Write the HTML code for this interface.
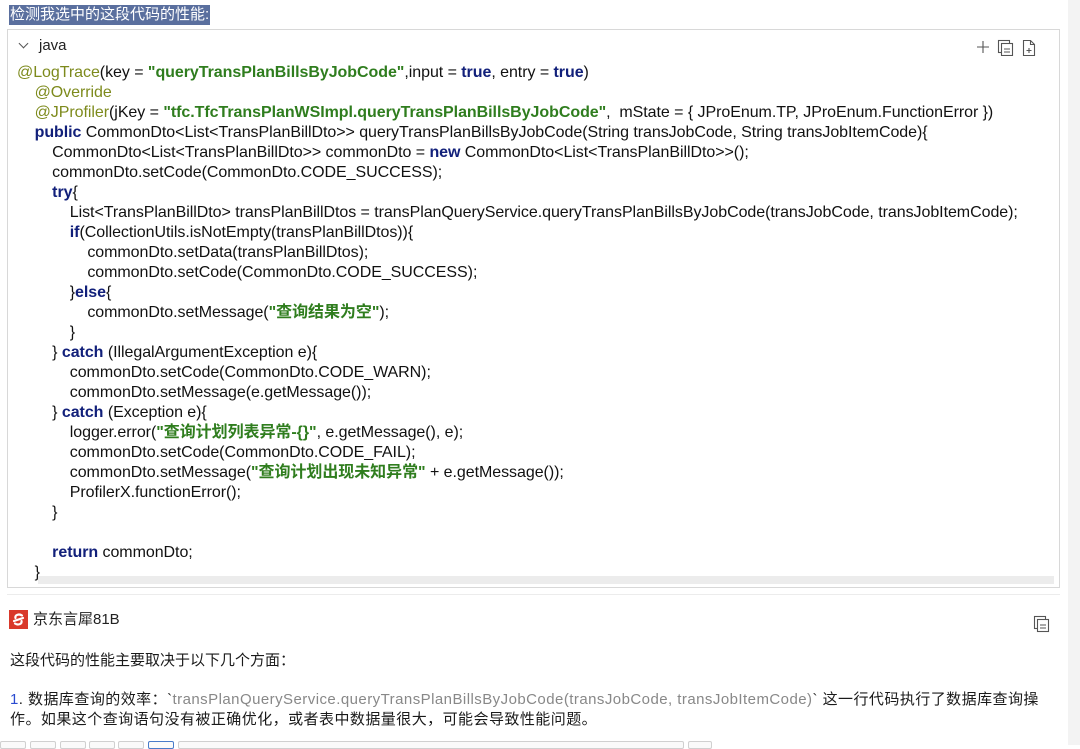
<!DOCTYPE html>
<html><head><meta charset="utf-8">
<style>
*{margin:0;padding:0;box-sizing:border-box}
body{width:1080px;height:745px;overflow:hidden;background:#fff;font-family:"Liberation Sans","Noto Sans CJK SC",sans-serif;color:#1a1a1a;position:relative}
.title{position:absolute;left:9px;top:5px;height:20px;background:#5a6f9e;color:#fff;font-size:15px;line-height:20px;padding:0 1px}
.side{position:absolute;left:1068px;top:0;width:12px;height:745px;background:#f3f3f3}
.box{position:absolute;left:7px;top:29px;width:1053px;height:559px;border:1px solid #d8d8d8;background:#fff;overflow:hidden}
.hdr{position:absolute;left:10px;top:7px;font-size:15px;color:#222}
.hdr .chev{display:inline-block;width:7px;height:7px;border-right:1.2px solid #555;border-bottom:1.2px solid #555;transform:rotate(45deg);margin:0 12px 3px 2px}
.code{position:absolute;left:9px;top:33px;font-size:16px;line-height:20px;color:#111;letter-spacing:-0.05px}
.code div{height:20px;white-space:pre}
.a{color:#7d8a1c}
.k{color:#12207a;font-weight:bold}
.s{color:#2f7d1e;font-weight:bold}
.sb{position:absolute;left:30px;top:546px;width:1016px;height:8px;background:#ececec}
.div{position:absolute;left:7px;top:594px;width:1053px;height:1px;background:#ececec}
.bot{position:absolute;top:741px;height:8px;border:1px solid #d0d0d0;border-radius:2px;background:#fafafa}
</style></head><body>
<div class="title">检测我选中的这段代码的性能:</div>
<div class="side"></div>
<div class="box">
 <div class="hdr"><span class="chev"></span>java</div>
 <svg style="position:absolute;left:968px;top:8px" width="70" height="18" viewBox="0 0 70 18" fill="none" stroke="#555" stroke-width="1.1">
  <path d="M7 3v12M1 9h12"/>
  <rect x="22.5" y="2.5" width="11" height="12"/><rect x="25.5" y="5.5" width="11" height="12" fill="#fff"/><path d="M28 11h6M28 14h6"/>
  <path d="M47.5 2.5h7l4 4v11h-11z"/><path d="M54.5 2.5v4h4M53 10v5M50.5 12.5h5"/>
 </svg>
 <div class="code"><div><span class="a">@LogTrace</span>(key = <span class="s">"queryTransPlanBillsByJobCode"</span>,input = <span class="k">true</span>, entry = <span class="k">true</span>)</div><div>    <span class="a">@Override</span></div><div>    <span class="a">@JProfiler</span>(jKey = <span class="s">"tfc.TfcTransPlanWSImpl.queryTransPlanBillsByJobCode"</span>,  mState = { JProEnum.TP, JProEnum.FunctionError })</div><div>    <span class="k">public</span> CommonDto&lt;List&lt;TransPlanBillDto&gt;&gt; queryTransPlanBillsByJobCode(String transJobCode, String transJobItemCode){</div><div>        CommonDto&lt;List&lt;TransPlanBillDto&gt;&gt; commonDto = <span class="k">new</span> CommonDto&lt;List&lt;TransPlanBillDto&gt;&gt;();</div><div>        commonDto.setCode(CommonDto.CODE_SUCCESS);</div><div>        <span class="k">try</span>{</div><div>            List&lt;TransPlanBillDto&gt; transPlanBillDtos = transPlanQueryService.queryTransPlanBillsByJobCode(transJobCode, transJobItemCode);</div><div>            <span class="k">if</span>(CollectionUtils.isNotEmpty(transPlanBillDtos)){</div><div>                commonDto.setData(transPlanBillDtos);</div><div>                commonDto.setCode(CommonDto.CODE_SUCCESS);</div><div>            }<span class="k">else</span>{</div><div>                commonDto.setMessage(<span class="s">"查询结果为空"</span>);</div><div>            }</div><div>        } <span class="k">catch</span> (IllegalArgumentException e){</div><div>            commonDto.setCode(CommonDto.CODE_WARN);</div><div>            commonDto.setMessage(e.getMessage());</div><div>        } <span class="k">catch</span> (Exception e){</div><div>            logger.error(<span class="s">"查询计划列表异常-{}"</span>, e.getMessage(), e);</div><div>            commonDto.setCode(CommonDto.CODE_FAIL);</div><div>            commonDto.setMessage(<span class="s">"查询计划出现未知异常"</span> + e.getMessage());</div><div>            ProfilerX.functionError();</div><div>        }</div><div> </div><div>        <span class="k">return</span> commonDto;</div><div>    }</div></div>
 <div class="sb"></div>
</div>
<div class="div"></div>
<svg style="position:absolute;left:9px;top:610px" width="19" height="19" viewBox="0 0 19 19"><rect width="19" height="19" fill="#d9392b"/><path d="M13 5.5C10 3.5 5.5 5 6.5 8M6 13.5c3 2 7.5.5 6.5-2.5M5 11l9-3" stroke="#fff" stroke-width="2.2" fill="none" stroke-linecap="round"/></svg>
<div style="position:absolute;left:33px;top:610px;font-size:15px;line-height:19px;color:#222">京东言犀81B</div>
<svg style="position:absolute;left:1033px;top:615px" width="18" height="18" viewBox="0 0 18 18" fill="none" stroke="#555" stroke-width="1.1"><rect x="1.5" y="1.5" width="11" height="12"/><rect x="4.5" y="4.5" width="11" height="12" fill="#fff"/><path d="M7 10h6M7 13h6"/></svg>
<div style="position:absolute;left:10px;top:651px;font-size:15px;line-height:20px;color:#1a1a1a">这段代码的性能主要取决于以下几个方面：</div>
<div style="position:absolute;left:10px;top:690px;width:1045px;font-size:15px;line-height:20px;color:#1a1a1a;letter-spacing:0.45px"><span style="color:#2a4bd0">1</span>. 数据库查询的效率：`<span style="color:#888">transPlanQueryService.queryTransPlanBillsByJobCode(transJobCode, transJobItemCode)</span>` 这一行代码执行了数据库查询操作。如果这个查询语句没有被正确优化，或者表中数据量很大，可能会导致性能问题。</div>
<div class="bot" style="left:0;width:26px"></div>
<div class="bot" style="left:30px;width:26px"></div>
<div class="bot" style="left:60px;width:26px"></div>
<div class="bot" style="left:89px;width:26px"></div>
<div class="bot" style="left:118px;width:26px"></div>
<div class="bot" style="left:148px;width:26px;border-color:#4a7cc9"></div>
<div class="bot" style="left:178px;width:506px"></div>
<div class="bot" style="left:688px;width:24px"></div>
</body></html>
